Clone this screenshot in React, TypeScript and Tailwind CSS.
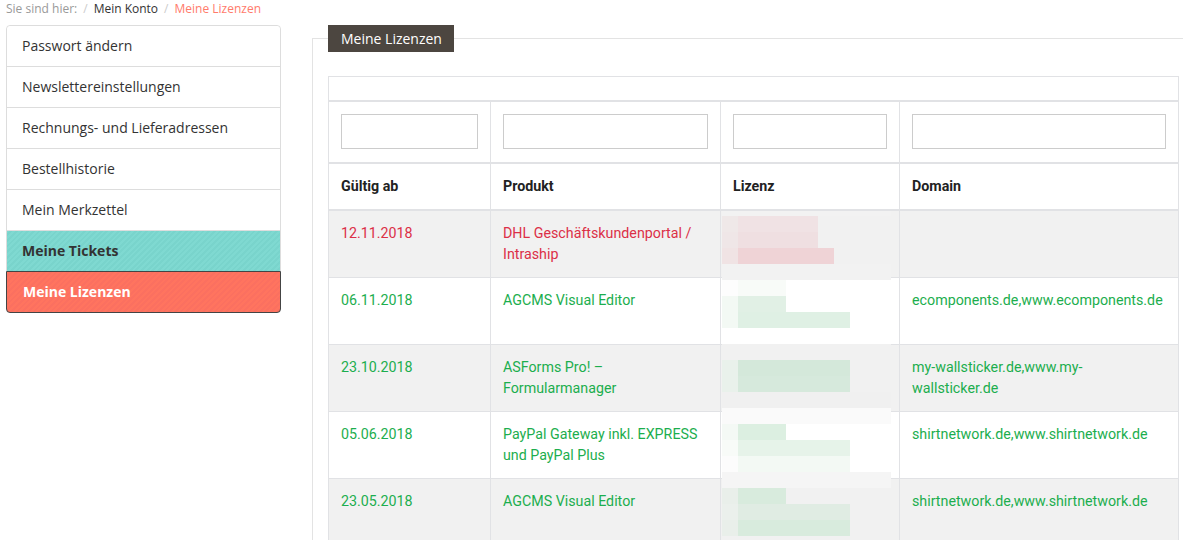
import React from "react";

const sideItems = [
  "Passwort ändern",
  "Newslettereinstellungen",
  "Rechnungs- und Lieferadressen",
  "Bestellhistorie",
  "Mein Merkzettel",
];

type Row = { date: string; product: string[]; domain: string[]; red?: boolean; gray: boolean };
const rows: Row[] = [
  { date: "12.11.2018", product: ["DHL Geschäftskundenportal /", "Intraship"], domain: [], red: true, gray: true },
  { date: "06.11.2018", product: ["AGCMS Visual Editor"], domain: ["ecomponents.de,www.ecomponents.de"], gray: false },
  { date: "23.10.2018", product: ["ASForms Pro! –", "Formularmanager"], domain: ["my-wallsticker.de,www.my-", "wallsticker.de"], gray: true },
  { date: "05.06.2018", product: ["PayPal Gateway inkl. EXPRESS", "und PayPal Plus"], domain: ["shirtnetwork.de,www.shirtnetwork.de"], gray: false },
  { date: "23.05.2018", product: ["AGCMS Visual Editor"], domain: ["shirtnetwork.de,www.shirtnetwork.de"], gray: true },
];

type Band = { h: number; c0: string; a: string; n: number; rest: string };
const bands: Band[] = [
  { h: 5, c0: "#f2f2f2", a: "#f2f2f2", n: 0, rest: "#f2f2f2" },
  { h: 16, c0: "#efe8e8", a: "#f0e2e4", n: 5, rest: "#f1f1f1" },
  { h: 16, c0: "#efe6e7", a: "#efdfe1", n: 5, rest: "#f1f1f1" },
  { h: 16, c0: "#f0e3e4", a: "#efd3d6", n: 6, rest: "#f1f1f1" },
  { h: 16, c0: "#f2f2f2", a: "#f2f2f2", n: 0, rest: "#f2f2f2" },
  { h: 16, c0: "#fdfdfd", a: "#f8fbf8", n: 3, rest: "#ffffff" },
  { h: 16, c0: "#f3f9f4", a: "#e1f0e5", n: 3, rest: "#ffffff" },
  { h: 16, c0: "#f3f9f4", a: "#dff0e4", n: 7, rest: "#ffffff" },
  { h: 16, c0: "#ffffff", a: "#ffffff", n: 0, rest: "#ffffff" },
  { h: 16, c0: "#f1f1f1", a: "#f1f1f1", n: 0, rest: "#f1f1f1" },
  { h: 16, c0: "#e9f1eb", a: "#d4e8da", n: 7, rest: "#f1f1f1" },
  { h: 16, c0: "#e9f1eb", a: "#d6e9dc", n: 7, rest: "#f1f1f1" },
  { h: 16, c0: "#f0f0f0", a: "#f0f0f0", n: 0, rest: "#f0f0f0" },
  { h: 16, c0: "#fafafa", a: "#fafafa", n: 0, rest: "#fafafa" },
  { h: 16, c0: "#f4f9f5", a: "#dcefe1", n: 3, rest: "#ffffff" },
  { h: 16, c0: "#f8fbf8", a: "#e6f3e9", n: 7, rest: "#ffffff" },
  { h: 16, c0: "#fcfcfc", a: "#f3f9f4", n: 7, rest: "#ffffff" },
  { h: 16, c0: "#f5f5f5", a: "#f5f5f5", n: 0, rest: "#f5f5f5" },
  { h: 16, c0: "#e9efea", a: "#d8ebdd", n: 3, rest: "#f1f1f1" },
  { h: 16, c0: "#ebf0ec", a: "#e0ece3", n: 7, rest: "#f1f1f1" },
  { h: 16, c0: "#e9efea", a: "#d8ebdd", n: 7, rest: "#f1f1f1" },
  { h: 16, c0: "#f1f1f1", a: "#f1f1f1", n: 0, rest: "#f1f1f1" },
];

function BlurOverlay() {
  return (
    <div className="absolute left-[394px] top-[135px] w-[169px] flex flex-col pointer-events-none">
      {bands.map((b, i) => (
        <div key={i} className="flex w-full" style={{ height: b.h }}>
          <div className="w-[16px] h-full" style={{ background: b.c0 }} />
          <div className="h-full" style={{ width: b.n * 16, background: b.a }} />
          <div className="flex-1 h-full" style={{ background: b.rest }} />
        </div>
      ))}
    </div>
  );
}

export default function App() {
  return (
    <div className="w-[1183px] h-[540px] overflow-hidden bg-white font-['Open_Sans',sans-serif] text-[#333]">
      <div className="pl-[6px] h-[25px] pt-[1px] text-[12px] leading-[16px] flex">
        <span className="text-[#999]">Sie sind hier:</span>
        <span className="text-[#ccc] px-[6px]">/</span>
        <span className="text-[#333]">Mein Konto</span>
        <span className="text-[#ccc] px-[6px]">/</span>
        <span className="text-[#ff7b6b]">Meine Lizenzen</span>
      </div>
      <div className="flex items-start">
        <div className="shrink-0 ml-[6px] w-[275px] border border-[#ddd] rounded-[4px] text-[14px]">
          {sideItems.map((t, i) => (
            <div
              key={t}
              className={`flex items-center pl-[15px] pb-[2px] bg-white ${i === 0 ? "h-[40px] rounded-t-[4px]" : "h-[41px] border-t border-[#ddd]"}`}
            >
              {t}
            </div>
          ))}
          <div className="h-[41px] flex items-center pl-[15px] pb-[2px] border-t border-[#ddd] font-bold text-[#333] bg-[repeating-linear-gradient(135deg,#7fd9d1_0px,#7fd9d1_2px,#79d4cc_2px,#79d4cc_4px)]">
            Meine Tickets
          </div>
          <div className="h-[42px] -mx-[1px] -mb-[1px] flex items-center pl-[16px] pb-[2px] border border-[#444] rounded-b-[4px] font-bold text-white bg-[repeating-linear-gradient(135deg,#ff745f_0px,#ff745f_2px,#fb7060_2px,#fb7060_4px)]">
            Meine Lizenzen
          </div>
        </div>
        <div className="shrink-0 ml-[31px] mt-[13px] w-[882px] h-[600px] border-l border-t border-[#e3e3e3] pl-[15px]">
          <div className="block w-fit -mt-[14px] bg-[#4c4640] text-white text-[14px] leading-[27px] h-[27px] pl-[13px] pr-[12px]">
            Meine Lizenzen
          </div>
          <div className="relative mt-[24px] w-[850px] font-['Roboto',sans-serif] text-[14.25px] leading-[21px]">
            <table className="w-full table-fixed border-collapse border border-[#e1e2e5]">
              <colgroup>
                <col className="w-[162px]" />
                <col className="w-[230px]" />
                <col className="w-[179px]" />
                <col className="w-[279px]" />
              </colgroup>
              <tbody>
                <tr className="h-[24px] border-b-2 border-[#e1e2e5]">
                  <td colSpan={4} />
                </tr>
                <tr className="border-b-2 border-[#e1e2e5]">
                  {[0, 1, 2, 3].map((i) => (
                    <td key={i} className="border-r border-[#e1e2e5] px-[12px] pt-[12px] pb-[13px]">
                      <div className="h-[35px] border border-[#ccc] bg-white" />
                    </td>
                  ))}
                </tr>
                <tr className="border-b-2 border-[#e1e2e5] text-[#222] font-bold">
                  {["Gültig ab", "Produkt", "Lizenz", "Domain"].map((h) => (
                    <td key={h} className="border-r border-[#e1e2e5] px-[12px] pt-[12px] pb-[12px] align-top">
                      {h}
                    </td>
                  ))}
                </tr>
                {rows.map((r, i) => {
                  const color = r.red ? "text-[#dc2f47]" : "text-[#1cae4e]";
                  return (
                    <tr
                      key={i}
                      className={`h-[67px] border-b border-[#e1e2e5] ${r.gray ? "bg-[#f1f1f1]" : "bg-white"} ${color}`}
                    >
                      <td className="border-r border-[#e1e2e5] px-[12px] pt-[12px] pb-[12px] align-top">{r.date}</td>
                      <td className="border-r border-[#e1e2e5] px-[12px] pt-[12px] pb-[12px] align-top">
                        {r.product.map((p) => (
                          <div key={p}>{p}</div>
                        ))}
                      </td>
                      <td className="border-r border-[#e1e2e5] px-[12px] pt-[12px] pb-[12px] align-top" />
                      <td className="px-[12px] pt-[12px] pb-[12px] align-top">
                        {r.domain.map((p) => (
                          <div key={p}>{p}</div>
                        ))}
                      </td>
                    </tr>
                  );
                })}
              </tbody>
            </table>
            <BlurOverlay />
          </div>
        </div>
      </div>
    </div>
  );
}
